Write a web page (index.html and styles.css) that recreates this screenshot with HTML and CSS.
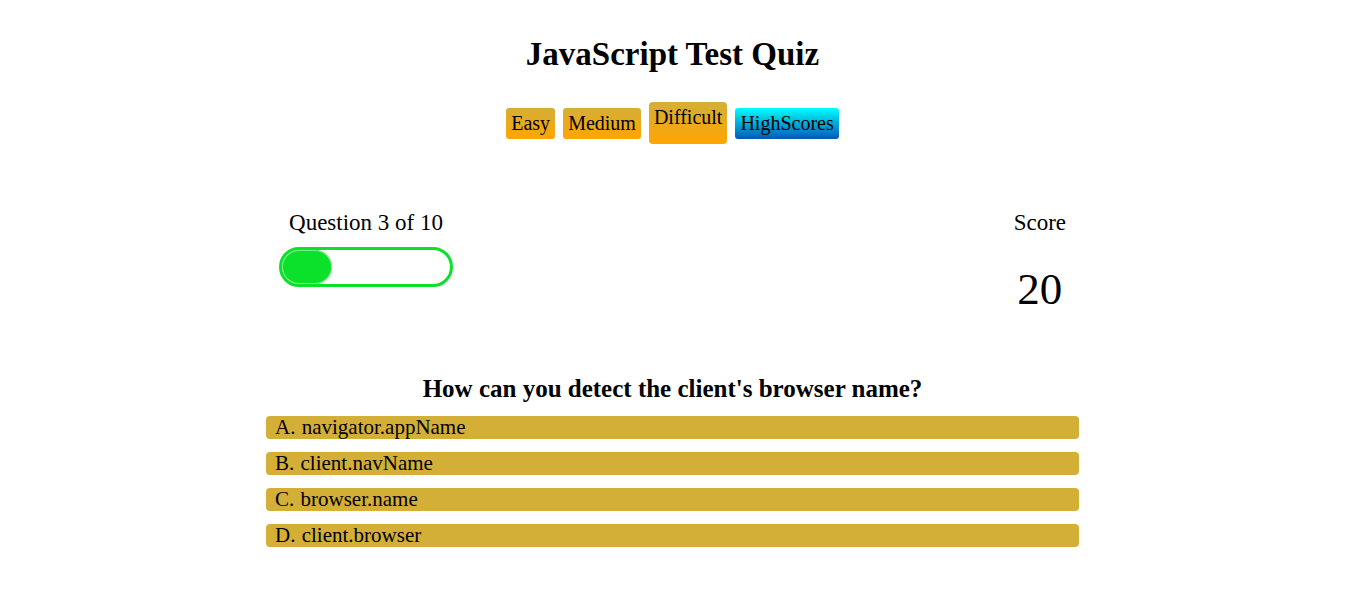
FILE: index.html
```html
<!DOCTYPE html>
<html lang="en">
<head>
<meta charset="utf-8">
<title>JavaScript Test Quiz</title>
<link rel="stylesheet" href="styles.css">
</head>
<body>
<main class="page">
  <h1 class="title">JavaScript Test Quiz</h1>
  <nav class="levels">
    <button class="btn btn-level">Easy</button>
    <button class="btn btn-level">Medium</button>
    <button class="btn btn-level btn-active">Difficult</button>
    <button class="btn btn-scores">HighScores</button>
  </nav>
  <section class="status">
    <div class="progress-col">
      <p class="label">Question 3 of 10</p>
      <div class="progress"><div class="progress-fill" style="width:30%"></div></div>
    </div>
    <div class="score-col">
      <p class="label">Score</p>
      <p class="score">20</p>
    </div>
  </section>
  <section class="quiz">
    <h2 class="question">How can you detect the client's browser name?</h2>
    <ul class="answers">
      <li class="answer"><span class="letter">A.</span> navigator.appName</li>
      <li class="answer"><span class="letter">B.</span> client.navName</li>
      <li class="answer"><span class="letter">C.</span> browser.name</li>
      <li class="answer"><span class="letter">D.</span> client.browser</li>
    </ul>
  </section>
</main>
</body>
</html>
```

FILE: styles.css
```css
* { box-sizing: border-box; }
html, body { background: #ffffff; }
body {
  margin: 0 8px 0 0;
  font-family: "Liberation Serif", "Times New Roman", serif;
  color: #000;
}
.page {
  width: 813px;
  margin: 0 auto;
}
.title {
  margin: 34px 0 0;
  text-align: center;
  font-size: 33px;
  line-height: 40px;
  font-weight: bold;
}
.levels {
  display: flex;
  justify-content: center;
  align-items: center;
  gap: 8px;
  margin-top: 28px;
}
.btn {
  font-family: inherit;
  font-size: 20px;
  line-height: 31px;
  height: 31px;
  padding: 0 5px;
  border: none;
  border-radius: 3px;
  color: #000;
  cursor: pointer;
}
.btn-level {
  background: linear-gradient(to bottom, #d4af37, #ffa500);
}
.btn-active {
  height: 42px;
  padding: 0 5px 11px;
  border-radius: 4px;
}
.btn-scores {
  background: linear-gradient(to bottom, #00ffff, #0058b8);
}
.status {
  display: flex;
  justify-content: space-between;
  padding: 0 13px;
  margin-top: 66px;
}
.label {
  margin: 0;
  font-size: 23px;
  line-height: 26px;
  text-align: center;
  white-space: nowrap;
}
.progress-col {
  width: 174px;
  display: flex;
  flex-direction: column;
  align-items: center;
}
.progress {
  width: 100%;
  margin-top: 11px;
  height: 40px;
  border: 3px solid #0be12a;
  border-radius: 20px;
  overflow: hidden;
}
.progress-fill {
  height: 100%;
  background: #0be12a;
  border-radius: 17px;
  box-shadow: inset 0 0 0 1px #7aef88;
}
.score-col {
  display: flex;
  flex-direction: column;
  align-items: center;
}
.score {
  margin: 30px 0 0;
  font-size: 45px;
  line-height: 46px;
}
.quiz { margin-top: 62px; }
.question {
  margin: 0;
  text-align: center;
  font-size: 25px;
  line-height: 30px;
  font-weight: bold;
}
.answers {
  list-style: none;
  margin: 12px 0 0;
  padding: 0;
  display: flex;
  flex-direction: column;
  gap: 13px;
}
.answer {
  height: 23px;
  line-height: 23px;
  padding-left: 9px;
  background: #d4af37;
  border-radius: 4px;
  font-size: 21px;
}
.letter { margin-right: 1px; }
```
